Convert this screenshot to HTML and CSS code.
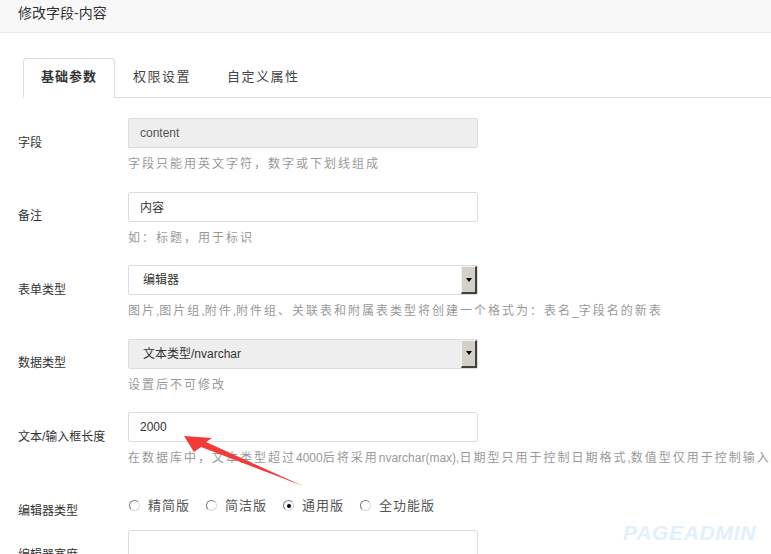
FILE: index.html
```html
<!DOCTYPE html>
<html lang="zh-CN">
<head>
<meta charset="utf-8">
<title>修改字段-内容</title>
<link rel="stylesheet" href="styles.css">
</head>
<body>
<div class="page">
  <div class="header"><span class="title">修改字段-内容</span></div>

  <div class="tabs">
    <div class="tab active">基础参数</div>
    <div class="tab">权限设置</div>
    <div class="tab">自定义属性</div>
  </div>

  <div class="form">
    <div class="row">
      <div class="label">字段</div>
      <div class="field">
        <input class="input readonly" type="text" value="content" readonly>
        <div class="help">字段只能用英文字符，数字或下划线组成</div>
      </div>
    </div>

    <div class="row">
      <div class="label">备注</div>
      <div class="field">
        <input class="input" type="text" value="内容">
        <div class="help">如：标题，用于标识</div>
      </div>
    </div>

    <div class="row">
      <div class="label">表单类型</div>
      <div class="field">
        <div class="select">
          <span class="select-value">编辑器</span>
          <span class="select-btn"><span class="tri"></span></span>
        </div>
        <div class="help">图片<span class="en">,</span>图片组<span class="en">,</span>附件<span class="en">,</span>附件组、关联表和附属表类型将创建一个格式为：表名<span class="en">_</span>字段名的新表</div>
      </div>
    </div>

    <div class="row">
      <div class="label">数据类型</div>
      <div class="field">
        <div class="select disabled">
          <span class="select-value">文本类型<span class="en">/nvarchar</span></span>
          <span class="select-btn"><span class="tri"></span></span>
        </div>
        <div class="help">设置后不可修改</div>
      </div>
    </div>

    <div class="row">
      <div class="label">文本/输入框长度</div>
      <div class="field">
        <input class="input" type="text" value="2000">
        <div class="help">在数据库中，文本类型超过<span class="en">4000</span>后将采用<span class="en">nvarchar(max),</span>日期型只用于控制日期格式<span class="en">,</span>数值型仅用于控制输入框的长度</div>
      </div>
    </div>

    <div class="row row-radio">
      <div class="label">编辑器类型</div>
      <div class="field">
        <div class="radios">
          <span class="radio-item"><span class="radio"></span><span class="radio-text">精简版</span></span>
          <span class="radio-item"><span class="radio"></span><span class="radio-text">简洁版</span></span>
          <span class="radio-item"><span class="radio checked"></span><span class="radio-text">通用版</span></span>
          <span class="radio-item"><span class="radio"></span><span class="radio-text">全功能版</span></span>
        </div>
      </div>
    </div>

    <div class="row">
      <div class="label">编辑器宽度</div>
      <div class="field">
        <input class="input" type="text" value="">
        <div class="help">编辑器的宽度</div>
      </div>
    </div>
  </div>

  <div class="watermark">PAGEADMIN</div>

  <svg class="arrow" width="771" height="554" viewBox="0 0 771 554" xmlns="http://www.w3.org/2000/svg">
    <polygon points="184,436 212,438 206,442 303,486 201,447 194,452" fill="#f23a3a"/>
  </svg>
</div>
</body>
</html>
```

FILE: styles.css
```css
html, body {
  margin: 0;
  padding: 0;
  overflow: hidden;
  background: #fff;
}

body {
  font-family: "Liberation Sans", "Noto Sans CJK SC", sans-serif;
  font-size: 12px;
  color: #333;
}

.page {
  position: relative;
  width: 771px;
  height: 554px;
  overflow: hidden;
}

.header {
  height: 27px;
  padding: 5px 18px 0;
  background: #f8f8f8;
  border-bottom: 1px solid #e6e6e6;
}

.title {
  font-size: 14px;
  line-height: 16px;
  color: #333;
}

.tabs {
  display: flex;
  margin: 25px 0 0 23px;
  border-bottom: 1px solid #dddddd;
}

.tab {
  height: 38px;
  line-height: 36px;
  padding: 0 17px 0 17px;
  border: 1px solid transparent;
  border-radius: 4px 4px 0 0;
  margin-bottom: -1px;
  font-size: 13px;
  letter-spacing: 1.5px;
  color: #444;
}

.tab.active {
  border-color: #dddddd;
  border-bottom-color: #fff;
  background: #fff;
  font-weight: bold;
  letter-spacing: 1px;
  color: #333;
}

.form {
  margin-top: 20px;
}

.row {
  display: grid;
  grid-template-columns: 110px 350px;
  padding-left: 18px;
  margin-bottom: 19.5px;
}

.label {
  align-self: center;
  padding-bottom: 5px;
  line-height: 16px;
  color: #333;
  white-space: nowrap;
}

.field {
  min-width: 0;
}

.input {
  display: block;
  box-sizing: border-box;
  width: 350px;
  height: 30px;
  margin: 0;
  padding: 0 11px;
  border: 1px solid #dcdcdc;
  border-radius: 2px;
  font-family: "Liberation Sans", "Noto Sans CJK SC", sans-serif;
  font-size: 12px;
  color: #333;
  background: #fff;
  outline: none;
}

.input.readonly {
  background: #eeeeee;
  color: #555;
}

.help {
  margin-top: 8px;
  line-height: 16px;
  font-size: 12px;
  letter-spacing: 2px;
  color: #999;
  white-space: nowrap;
}

.en {
  letter-spacing: 0;
}

.select {
  display: flex;
  box-sizing: border-box;
  width: 350px;
  height: 30px;
  border: 1px solid #dcdcdc;
  border-radius: 2px;
  background: #fff;
}

.select.disabled {
  background: #eeeeee;
}

.select-value {
  flex: 1;
  padding-left: 14px;
  line-height: 28px;
  color: #333;
}

.select-btn {
  box-sizing: border-box;
  width: 16px;
  display: flex;
  align-items: center;
  justify-content: center;
  background: #d4d0c8;
  border-style: solid;
  border-width: 1px 2px 2px 1px;
  border-color: #f4f3ef #404040 #404040 #f4f3ef;
}

.tri {
  width: 0;
  height: 0;
  border-left: 3.5px solid transparent;
  border-right: 3.5px solid transparent;
  border-top: 4px solid #000;
}

.row-radio {
  padding-top: 5px;
  margin-bottom: 9.5px;
}

.row-radio .label {
  align-self: start;
  padding-top: 12px;
  padding-bottom: 0;
}

.radios {
  display: flex;
  align-items: center;
  height: 30px;
  padding-left: 1px;
}

.radio-item {
  display: flex;
  align-items: center;
  margin-right: 16px;
}

.radio {
  box-sizing: border-box;
  width: 11px;
  height: 11px;
  border-radius: 50%;
  border: 1px solid;
  border-color: #7a7a7a #d8d8d8 #d8d8d8 #7a7a7a;
  background: #fff;
  margin-right: 8px;
  display: flex;
  align-items: center;
  justify-content: center;
}

.radio.checked::after {
  content: "";
  width: 4px;
  height: 4px;
  border-radius: 50%;
  background: #000;
}

.radio-text {
  font-size: 13px;
  letter-spacing: 1px;
  color: #555;
  line-height: 16px;
}

.watermark {
  position: absolute;
  left: 623px;
  top: 522px;
  font-family: "Liberation Sans", sans-serif;
  font-size: 21px;
  line-height: 21px;
  font-weight: bold;
  font-style: italic;
  letter-spacing: 0.7px;
  color: #e1f0fd;
}

.arrow {
  position: absolute;
  left: 0;
  top: 0;
  pointer-events: none;
}
```
